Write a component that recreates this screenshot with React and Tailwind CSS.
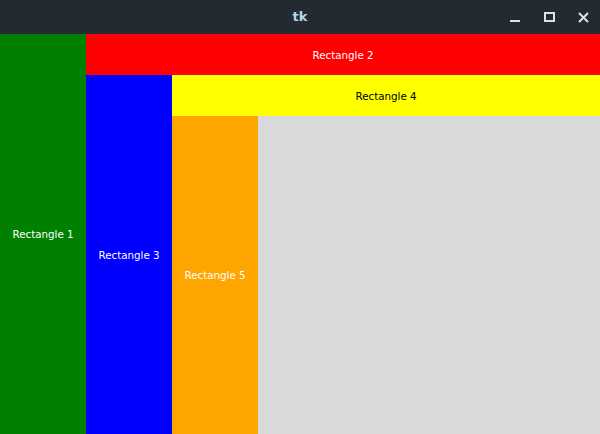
export default function App() {
  const font = { fontFamily: '"DejaVu Sans", sans-serif' };
  return (
    <div className="w-[600px] h-[434px] flex flex-col overflow-hidden" style={font}>
      <div className="h-[34px] bg-[#232b31] flex items-center relative shrink-0">
        <div className="flex-1 text-center text-[13px] font-bold text-[#b5d8e6]">tk</div>
        <div className="absolute right-0 top-0 h-[34px] flex items-center">
          <svg width="110" height="34" viewBox="0 0 110 34" className="text-[#dde2e4]">
            <path d="M20 21h10" stroke="currentColor" strokeWidth="2" />
            <rect x="55" y="13" width="9" height="8" fill="none" stroke="currentColor" strokeWidth="2" />
            <path d="M89 13l9 9M98 13l-9 9" stroke="currentColor" strokeWidth="2" />
          </svg>
        </div>
      </div>
      <div className="flex flex-1 text-[10.3px]">
        <div className="w-[86px] bg-[#008000] flex items-center justify-center text-white pt-[2px]">Rectangle 1</div>
        <div className="flex-1 flex flex-col">
          <div className="h-[41px] bg-[#ff0000] flex items-center justify-center text-white pt-[2px]">Rectangle 2</div>
          <div className="flex-1 flex">
            <div className="w-[86px] bg-[#0000ff] flex items-center justify-center text-white pt-[2px]">Rectangle 3</div>
            <div className="flex-1 flex flex-col">
              <div className="h-[41px] bg-[#ffff00] flex items-center justify-center text-black pt-[2px]">Rectangle 4</div>
              <div className="flex-1 flex">
                <div className="w-[86px] bg-[#ffa500] flex items-center justify-center text-white pt-[2px]">Rectangle 5</div>
                <div className="flex-1 bg-[#d9d9d9]"></div>
              </div>
            </div>
          </div>
        </div>
      </div>
    </div>
  );
}
